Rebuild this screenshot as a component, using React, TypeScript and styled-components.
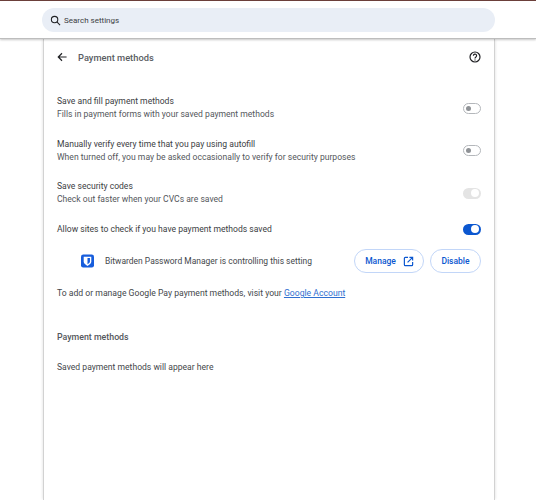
import React from "react";
import styled, { createGlobalStyle } from "styled-components";

const GlobalStyle = createGlobalStyle`
  html, body {
    margin: 0;
    height: 100%;
    background: #ffffff;
  }
  body {
    font-family: "Roboto", "Liberation Sans", sans-serif;
    overflow: hidden;
  }
`;

const Page = styled.div`
  width: 536px;
  height: 500px;
  overflow: hidden;
  display: flex;
  flex-direction: column;
`;

const TopBar = styled.header`
  height: 39px;
  box-sizing: border-box;
  border-top: 1px solid #6b3f3a;
  border-bottom: 1px solid #bdbdbd;
  box-shadow: 0 1px 2px rgba(0, 0, 0, 0.22);
  padding: 7px 41px 0 42px;
  position: relative;
  z-index: 1;
`;

const SearchBox = styled.div`
  height: 24px;
  border-radius: 12px;
  background: #e9eef6;
  display: flex;
  align-items: center;
  gap: 3px;
  padding-left: 8px;
  font-size: 8px;
  color: #3c4043;
`;

const Card = styled.main`
  flex: 1;
  width: 452px;
  margin-left: 43px;
  box-sizing: border-box;
  background: #ffffff;
  border-left: 1px solid #d2d2d2;
  border-right: 1px solid #d2d2d2;
  box-shadow: -2px 0 2px -1px #ececec, 2px 0 2px -1px #ececec;
  padding: 0 13px;
  color: #303134;
`;

const TitleRow = styled.div`
  height: 36px;
  display: flex;
  align-items: center;
  margin-bottom: 12px;
`;

const BackButton = styled.span`
  display: flex;
  width: 21px;
`;

const PageTitle = styled.h1`
  margin: 0;
  flex: 1;
  font-size: 9.3px;
  font-weight: 500;
  color: #5a5d62;
`;

const Setting = styled.div<{ $height: number }>`
  height: ${(p) => p.$height}px;
  display: flex;
  align-items: center;
  justify-content: space-between;
`;

const SettingText = styled.div`
  font-size: 8.58px;
  line-height: 13px;
  color: #3c4043;
`;

const Sub = styled.div`
  color: #54575c;
`;

const Track = styled.span<{ $state: "off" | "locked" | "on" }>`
  width: 18px;
  height: 11px;
  box-sizing: border-box;
  border-radius: 6px;
  display: flex;
  align-items: center;
  padding: 0 1px;
  justify-content: ${(p) => (p.$state === "off" ? "flex-start" : "flex-end")};
  border: 1px solid ${(p) => (p.$state === "off" ? "#b4b7bb" : "transparent")};
  background: ${(p) =>
    p.$state === "on" ? "#0b57d0" : p.$state === "locked" ? "#e4e4e4" : "#ffffff"};
`;

const Knob = styled.span<{ $state: "off" | "locked" | "on" }>`
  width: ${(p) => (p.$state === "off" ? 5 : 8)}px;
  height: ${(p) => (p.$state === "off" ? 5 : 8)}px;
  margin-left: ${(p) => (p.$state === "off" ? 1 : 0)}px;
  border-radius: 50%;
  background: ${(p) => (p.$state === "off" ? "#8f9296" : "#ffffff")};
`;

const ExtensionRow = styled.div`
  height: 34px;
  display: flex;
  align-items: center;
  padding-left: 24px;
  font-size: 8.46px;
  color: #44474b;
`;

const ExtensionName = styled.span`
  flex: 1;
  margin-left: 11px;
`;

const Pill = styled.button<{ $wide?: boolean }>`
  height: 24px;
  box-sizing: border-box;
  border: 1px solid #c2d6f8;
  border-radius: 12px;
  background: #ffffff;
  color: #0b57d0;
  font-family: inherit;
  font-size: 8.5px;
  font-weight: 500;
  display: flex;
  align-items: center;
  justify-content: center;
  gap: 7px;
  padding: 0 0 0 ${(p) => (p.$wide ? 1 : 0)}px;
  width: ${(p) => (p.$wide ? 70 : 51)}px;
  margin-left: 6px;
`;

const Note = styled.div`
  font-size: 8.65px;
  line-height: 13px;
  margin-top: 9px;
  color: #44474b;
`;

const AccountLink = styled.a`
  color: #2f6fd0;
  text-decoration: underline;
`;

const SectionTitle = styled.h2`
  margin: 31px 0 0;
  font-size: 8.8px;
  line-height: 13px;
  font-weight: 500;
  color: #54575c;
`;

const EmptyText = styled.div`
  margin-top: 17px;
  font-size: 8.58px;
  line-height: 13px;
  color: #44474b;
`;

const Toggle = ({ state }: { state: "off" | "locked" | "on" }) => (
  <Track $state={state}>
    <Knob $state={state} />
  </Track>
);

const settings: { title: string; sub?: string; state: "off" | "locked" | "on"; height: number }[] = [
  { title: "Save and fill payment methods", sub: "Fills in payment forms with your saved payment methods", state: "off", height: 42 },
  { title: "Manually verify every time that you pay using autofill", sub: "When turned off, you may be asked occasionally to verify for security purposes", state: "off", height: 43 },
  { title: "Save security codes", sub: "Check out faster when your CVCs are saved", state: "locked", height: 42 },
  { title: "Allow sites to check if you have payment methods saved", state: "on", height: 30 },
];

export default function App() {
  return (
    <Page>
      <GlobalStyle />
      <TopBar>
        <SearchBox>
          <svg width="11" height="11" viewBox="0 0 24 24" fill="none" stroke="#202124" strokeWidth="2.3">
            <circle cx="10" cy="10" r="7" />
            <path d="M15 15l7 7" />
          </svg>
          Search settings
        </SearchBox>
      </TopBar>
      <Card>
        <TitleRow>
          <BackButton>
            <svg width="10" height="10" viewBox="0 0 24 24" fill="none" stroke="#202124" strokeWidth="2.8">
              <path d="M23 12H3M12 3l-9 9 9 9" />
            </svg>
          </BackButton>
          <PageTitle>Payment methods</PageTitle>
          <svg width="12" height="12" viewBox="0 0 24 24" fill="none" stroke="#202124" strokeWidth="2.4">
            <circle cx="12" cy="12" r="10" />
            <path d="M8.800 9.500a3.200 3.200 0 1 1 5 2.600c-1.100.8-1.800 1.400-1.800 2.900" />
            <path d="M12 17v2" />
          </svg>
        </TitleRow>
        {settings.map((s) => (
          <Setting key={s.title} $height={s.height}>
            <SettingText>
              {s.title}
              {s.sub && <Sub>{s.sub}</Sub>}
            </SettingText>
            <Toggle state={s.state} />
          </Setting>
        ))}
        <ExtensionRow>
          <svg width="13" height="14" viewBox="0 0 24 24">
            <rect x="0" y="0" width="24" height="24" rx="4" fill="#175ddc" />
            <path d="M5 4h14v9c0 4-3.500 6-7 8-3.500-2-7-4-7-8z" fill="#ffffff" />
            <path d="M12 6.500h4.500V13c0 2.500-2.500 3.800-4.500 5z" fill="#175ddc" />
          </svg>
          <ExtensionName>Bitwarden Password Manager is controlling this setting</ExtensionName>
          <Pill $wide>
            Manage
            <svg width="11" height="11" viewBox="0 0 24 24" fill="none" stroke="#0b57d0" strokeWidth="2.6">
              <path d="M11 3H5a2 2 0 0 0-2 2v14a2 2 0 0 0 2 2h14a2 2 0 0 0 2-2v-6M14 3h7v7M21 3L10 14" />
            </svg>
          </Pill>
          <Pill>Disable</Pill>
        </ExtensionRow>
        <Note>
          To add or manage Google Pay payment methods, visit your <AccountLink>Google Account</AccountLink>
        </Note>
        <SectionTitle>Payment methods</SectionTitle>
        <EmptyText>Saved payment methods will appear here</EmptyText>
      </Card>
    </Page>
  );
}
